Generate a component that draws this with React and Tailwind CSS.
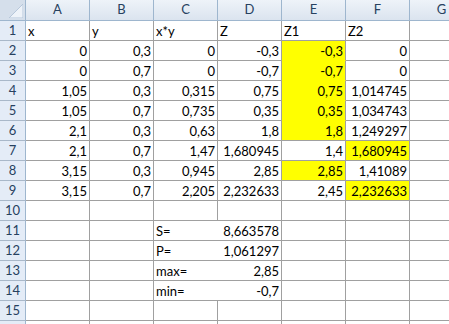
import React from "react";

// --- Sheet data ---
// each cell: [value, kind] where kind "t" = text (left), "y" = yellow fill, otherwise number (right)
const cols = ["A", "B", "C", "D", "E", "F", "G"];

const rows = [
  [["x", "t"], ["y", "t"], ["x*y", "t"], ["Z", "t"], ["Z1", "t"], ["Z2", "t"], null],
  [["0"], ["0,3"], ["0"], ["-0,3"], ["-0,3", "y"], ["0"], null],
  [["0"], ["0,7"], ["0"], ["-0,7"], ["-0,7", "y"], ["0"], null],
  [["1,05"], ["0,3"], ["0,315"], ["0,75"], ["0,75", "y"], ["1,014745"], null],
  [["1,05"], ["0,7"], ["0,735"], ["0,35"], ["0,35", "y"], ["1,034743"], null],
  [["2,1"], ["0,3"], ["0,63"], ["1,8"], ["1,8", "y"], ["1,249297"], null],
  [["2,1"], ["0,7"], ["1,47"], ["1,680945"], ["1,4"], ["1,680945", "y"], null],
  [["3,15"], ["0,3"], ["0,945"], ["2,85"], ["2,85", "y"], ["1,41089"], null],
  [["3,15"], ["0,7"], ["2,205"], ["2,232633"], ["2,45"], ["2,232633", "y"], null],
  [null, null, null, null, null, null, null],
  [null, null, ["S=", "t"], ["8,663578"], null, null, null],
  [null, null, ["P=", "t"], ["1,061297"], null, null, null],
  [null, null, ["max=", "t"], ["2,85"], null, null, null],
  [null, null, ["min=", "t"], ["-0,7"], null, null, null],
  [null, null, null, null, null, null, null],
  [null, null, null, null, null, null, null],
];

function isYellow(r, c) {
  const cell = rows[r] && rows[r][c];
  return !!cell && cell[1] === "y";
}

function Cell({ r, c }) {
  const cell = rows[r][c];
  const yellow = isYellow(r, c);
  // yellow block in column E hides the line between stacked filled cells
  const joinBelow = yellow && isYellow(r + 1, c);
  // C11:C14 have no line towards D
  const noRight = c === 2 && r >= 10 && r <= 13;
  const isText = cell && cell[1] === "t";

  return (
    <div
      className={
        "h-5 flex items-end pb-[2px] text-[13px] leading-none text-black whitespace-nowrap overflow-hidden border-b " +
        (joinBelow ? "border-b-[#ffff00] " : "border-b-[#a0a0a0] ") +
        (noRight ? "" : "border-r border-r-[#a0a0a0] ") +
        (yellow ? "bg-[#ffff00] " : "bg-white ") +
        (isText ? "justify-start pl-[2px]" : "justify-end pr-[2px]")
      }
    >
      {cell ? cell[0] : ""}
    </div>
  );
}

export default function App() {
  return (
    <div
      className="w-[449px] h-[324px] overflow-hidden bg-white"
      style={{ fontFamily: "Lato, 'Open Sans', sans-serif" }}
    >
      <div className="grid grid-cols-[26px_repeat(7,64px)]">
        {/* corner */}
        <div className="h-[21px] bg-[#d5dfeb] border-r border-b border-[#9eb6ce] relative">
          <svg className="absolute right-[2px] bottom-[2px]" width="14" height="14" viewBox="0 0 14 14">
            <polygon points="14,0 14,14 0,14" fill="#eef3f9" stroke="#b7c7da" strokeWidth="1" />
          </svg>
        </div>

        {/* column headers */}
        {cols.map((c) => (
          <div
            key={c}
            className="h-[21px] flex items-center justify-center text-[13px] text-[#27415f] bg-gradient-to-b from-[#eef3f9] to-[#dbe4ef] border-r border-b border-[#9eb6ce]"
          >
            {c}
          </div>
        ))}

        {/* body rows; row 16 only peeks in at the bottom edge */}
        {rows.map((row, r) => (
          <React.Fragment key={r}>
            <div className="h-5 flex items-center justify-center text-[13px] text-[#27415f] bg-[#e4ecf7] border-r border-r-[#9eb6ce] border-b border-b-[#a9b8c9]">
              {r < 15 ? r + 1 : ""}
            </div>
            {row.map((_, c) => (
              <Cell key={c} r={r} c={c} />
            ))}
          </React.Fragment>
        ))}
      </div>
    </div>
  );
}
